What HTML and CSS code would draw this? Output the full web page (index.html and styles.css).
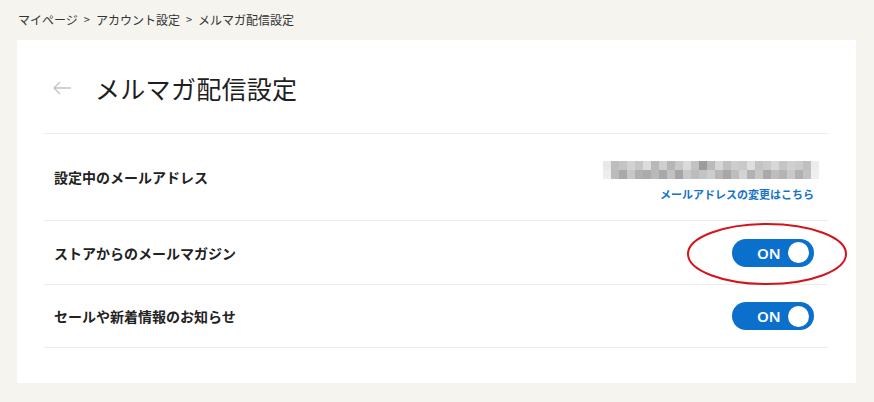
FILE: index.html
```html
<!DOCTYPE html>
<html lang="ja">
<head>
  <meta charset="UTF-8">
  <meta name="viewport" content="width=device-width, initial-scale=1.0">
  <title>メルマガ配信設定</title>
  <link rel="stylesheet" href="styles.css">
</head>
<body>
  <nav class="breadcrumb">
    <span>マイページ</span><span class="sep">&gt;</span><span>アカウント設定</span><span class="sep">&gt;</span><span>メルマガ配信設定</span>
  </nav>

  <main class="card">
    <div class="card-head">
      <svg class="back" width="20" height="14" viewBox="0 0 20 14">
        <path d="M19 7H2M8 1L2 7l6 6" fill="none" stroke="#c4c4c4" stroke-width="1.4"/>
      </svg>
      <h1>メルマガ配信設定</h1>
    </div>

    <div class="row row-mail">
      <div class="label">設定中のメールアドレス</div>
      <div class="mail">
        <svg class="mosaic" width="216" height="18" viewBox="0 0 27 2" preserveAspectRatio="none">
          <g shape-rendering="crispEdges">
            <rect x="0" y="0" width="1" height="1" fill="#e8e8e8"/><rect x="1" y="0" width="1" height="1" fill="#bdbdbd"/><rect x="2" y="0" width="1" height="1" fill="#c4c4c4"/><rect x="3" y="0" width="1" height="1" fill="#d2d2d2"/><rect x="4" y="0" width="1" height="1" fill="#c6c6c6"/><rect x="5" y="0" width="1" height="1" fill="#dcdcdc"/><rect x="6" y="0" width="1" height="1" fill="#b8b8b8"/><rect x="7" y="0" width="1" height="1" fill="#cfcfcf"/><rect x="8" y="0" width="1" height="1" fill="#b6b6b6"/><rect x="9" y="0" width="1" height="1" fill="#c8c8c8"/><rect x="10" y="0" width="1" height="1" fill="#dadada"/><rect x="11" y="0" width="1" height="1" fill="#c2c2c2"/><rect x="12" y="0" width="1" height="1" fill="#9c9c9c"/><rect x="13" y="0" width="1" height="1" fill="#bababa"/><rect x="14" y="0" width="1" height="1" fill="#d6d6d6"/><rect x="15" y="0" width="1" height="1" fill="#c0c0c0"/><rect x="16" y="0" width="1" height="1" fill="#cdcdcd"/><rect x="17" y="0" width="1" height="1" fill="#c9c9c9"/><rect x="18" y="0" width="1" height="1" fill="#dedede"/><rect x="19" y="0" width="1" height="1" fill="#c3c3c3"/><rect x="20" y="0" width="1" height="1" fill="#cacaca"/><rect x="21" y="0" width="1" height="1" fill="#d8d8d8"/><rect x="22" y="0" width="1" height="1" fill="#c5c5c5"/><rect x="23" y="0" width="1" height="1" fill="#d0d0d0"/><rect x="24" y="0" width="1" height="1" fill="#cbcbcb"/><rect x="25" y="0" width="1" height="1" fill="#bfbfbf"/><rect x="26" y="0" width="1" height="1" fill="#ececec"/>
            <rect x="0" y="1" width="1" height="1" fill="#ededed"/><rect x="1" y="1" width="1" height="1" fill="#bbbbbb"/><rect x="2" y="1" width="1" height="1" fill="#a9a9a9"/><rect x="3" y="1" width="1" height="1" fill="#c7c7c7"/><rect x="4" y="1" width="1" height="1" fill="#b0b0b0"/><rect x="5" y="1" width="1" height="1" fill="#ababab"/><rect x="6" y="1" width="1" height="1" fill="#b9b9b9"/><rect x="7" y="1" width="1" height="1" fill="#a8a8a8"/><rect x="8" y="1" width="1" height="1" fill="#c1c1c1"/><rect x="9" y="1" width="1" height="1" fill="#a5a5a5"/><rect x="10" y="1" width="1" height="1" fill="#c8c8c8"/><rect x="11" y="1" width="1" height="1" fill="#bcbcbc"/><rect x="12" y="1" width="1" height="1" fill="#c4c4c4"/><rect x="13" y="1" width="1" height="1" fill="#cdcdcd"/><rect x="14" y="1" width="1" height="1" fill="#b7b7b7"/><rect x="15" y="1" width="1" height="1" fill="#a7a7a7"/><rect x="16" y="1" width="1" height="1" fill="#bdbdbd"/><rect x="17" y="1" width="1" height="1" fill="#d3d3d3"/><rect x="18" y="1" width="1" height="1" fill="#b2b2b2"/><rect x="19" y="1" width="1" height="1" fill="#c6c6c6"/><rect x="20" y="1" width="1" height="1" fill="#a9a9a9"/><rect x="21" y="1" width="1" height="1" fill="#bebebe"/><rect x="22" y="1" width="1" height="1" fill="#b4b4b4"/><rect x="23" y="1" width="1" height="1" fill="#c9c9c9"/><rect x="24" y="1" width="1" height="1" fill="#b1b1b1"/><rect x="25" y="1" width="1" height="1" fill="#c2c2c2"/><rect x="26" y="1" width="1" height="1" fill="#efefef"/>
          </g>
        </svg>
        <a class="change-link" href="#">メールアドレスの変更はこちら</a>
      </div>
    </div>

    <div class="row">
      <div class="label">ストアからのメールマガジン</div>
      <div class="toggle-wrap">
        <button class="toggle"><span>ON</span><i class="knob"></i></button>
        <svg class="mark" width="162" height="64" viewBox="0 0 162 64">
          <ellipse cx="81" cy="32" rx="79" ry="30" fill="none" stroke="#d4141c" stroke-width="2"/>
        </svg>
      </div>
    </div>

    <div class="row">
      <div class="label">セールや新着情報のお知らせ</div>
      <div class="toggle-wrap">
        <button class="toggle"><span>ON</span><i class="knob"></i></button>
      </div>
    </div>
  </main>
</body>
</html>
```

FILE: styles.css
```css
body {
  margin: 0;
  background-color: #f5f4ef;
  font-family: "Noto Sans CJK JP", "Noto Sans", sans-serif;
  color: #222;
}

.breadcrumb {
  height: 40px;
  padding-left: 18px;
  display: flex;
  align-items: center;
  font-size: 12px;
  color: #333;
  box-sizing: border-box;
  padding-bottom: 2px;
}

.breadcrumb .sep {
  margin: 0 6px;
  font-size: 11px;
}

.card {
  margin: 0 18px 0 17px;
  background-color: #fff;
  padding: 0 28px 35px 27px;
}

.card-head {
  height: 94px;
  display: flex;
  align-items: center;
  border-bottom: 1px solid #ececec;
  padding-top: 2px;
  box-sizing: border-box;
}

.back {
  margin-left: 8px;
}

.card-head h1 {
  margin: 0 0 0 23px;
  font-size: 25px;
  font-weight: 400;
  letter-spacing: 0.3px;
  color: #1e1e1e;
}

.row {
  display: flex;
  align-items: center;
  justify-content: space-between;
  height: 63px;
  padding: 0 14px 0 10px;
  border-bottom: 1px solid #ececec;
}

.row:last-child {
  height: 62px;
}

.row-mail {
  height: 86px;
  padding-right: 16px;
}

.label {
  font-size: 14px;
  font-weight: 700;
  color: #222;
}

.mail {
  display: flex;
  flex-direction: column;
  align-items: flex-end;
  padding-top: 8px;
}

.mosaic {
  display: block;
  margin-right: -7px;
  filter: blur(0.5px);
}

.change-link {
  margin-top: 7px;
  margin-right: -2px;
  font-size: 11px;
  font-weight: 700;
  color: #1572c9;
  text-decoration: none;
}

.toggle-wrap {
  position: relative;
}

.toggle {
  width: 82px;
  height: 28px;
  border: none;
  border-radius: 14px;
  background-color: #0b6fcc;
  color: #fff;
  display: flex;
  align-items: center;
  padding: 0 4px 0 25px;
  box-sizing: border-box;
  font-family: "Noto Sans", sans-serif;
  font-size: 15px;
  font-weight: 600;
}

.knob {
  width: 21px;
  height: 21px;
  border-radius: 50%;
  background-color: #fff;
  margin-left: auto;
  margin-right: 1px;
}

.mark {
  position: absolute;
  left: -46px;
  top: -17px;
}
```
